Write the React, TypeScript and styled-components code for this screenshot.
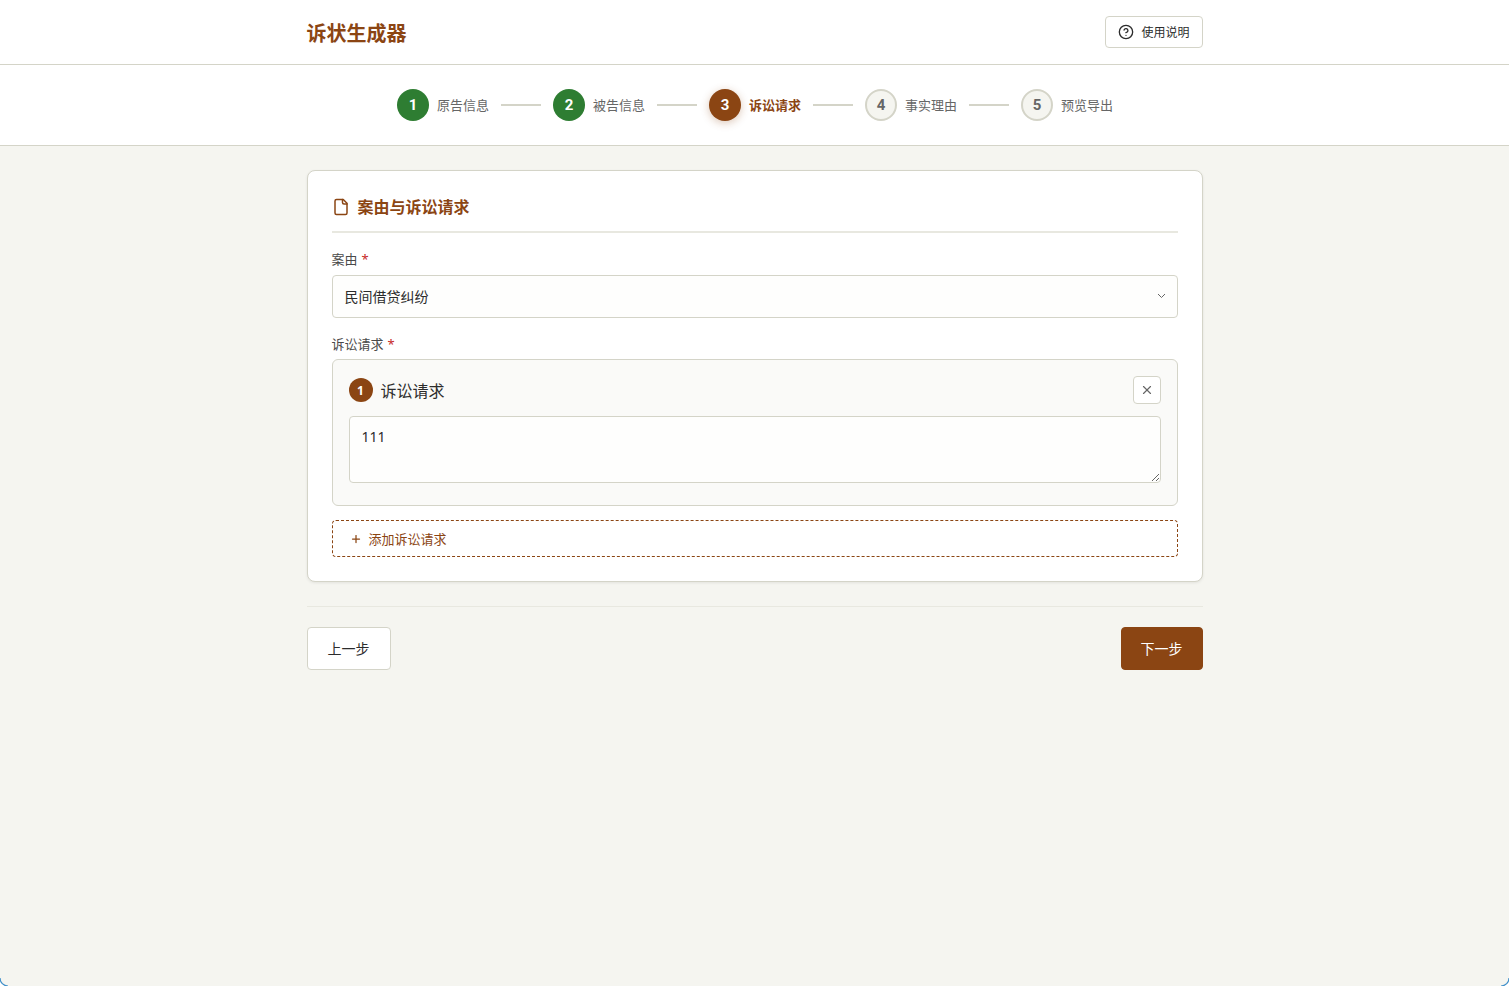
import { Fragment } from "react";
import styled, { createGlobalStyle } from "styled-components";

const GlobalStyle = createGlobalStyle`
  * {
    box-sizing: border-box;
  }
  html, body {
    margin: 0;
    height: 100%;
    background: #f5f5f0;
  }
  body {
    font-family: "Noto Sans", "Noto Sans CJK SC", sans-serif;
    color: #2c2c2c;
  }
`;

const Page = styled.div`
  min-height: 986px;
  background: #f5f5f0;
`;

const Header = styled.header`
  height: 65px;
  background: #fff;
  border-bottom: 1px solid #d4d4c8;
`;

const HeaderInner = styled.div`
  width: 896px;
  height: 100%;
  margin: 0 auto;
  display: flex;
  align-items: center;
  justify-content: space-between;
`;

const Logo = styled.h1`
  margin: 4px 0 0;
  font-size: 20px;
  line-height: 28px;
  font-weight: 700;
  color: #8b4513;
`;

const HelpButton = styled.button`
  height: 32px;
  width: 98px;
  padding: 0 12px;
  display: flex;
  align-items: center;
  gap: 8px;
  font-family: inherit;
  font-size: 12px;
  color: #2c2c2c;
  background: #fff;
  border: 1px solid #d4d4c8;
  border-radius: 4px;
`;

const StepBar = styled.nav`
  height: 81px;
  padding-left: 1px;
  background: #fff;
  border-bottom: 1px solid #d4d4c8;
  display: flex;
  align-items: center;
  justify-content: center;
`;

const Step = styled.div`
  display: flex;
  align-items: center;
  gap: 8px;
`;

const StepCircle = styled.div<{ $state: "done" | "active" | "todo" }>`
  width: 32px;
  height: 32px;
  border-radius: 50%;
  display: flex;
  align-items: center;
  justify-content: center;
  font-family: Roboto, sans-serif;
  font-size: 15px;
  font-weight: 700;
  color: ${(p) => (p.$state === "todo" ? "#666" : "#fff")};
  background: ${(p) =>
    p.$state === "done" ? "#2e7d32" : p.$state === "active" ? "#8b4513" : "#f5f5f0"};
  border: ${(p) => (p.$state === "todo" ? "2px solid #d4d4c8" : "none")};
  box-shadow: ${(p) => (p.$state === "active" ? "0 2px 8px rgba(139, 69, 19, 0.3)" : "none")};
`;

const StepLabel = styled.span<{ $active?: boolean }>`
  font-size: 13px;
  line-height: 18px;
  font-weight: ${(p) => (p.$active ? 700 : 400)};
  color: ${(p) => (p.$active ? "#8b4513" : "#666")};
`;

const Connector = styled.div`
  width: 40px;
  height: 2px;
  margin: 0 12px;
  background: #d4d4c8;
`;

const Main = styled.main`
  width: 896px;
  margin: 0 auto;
  padding-top: 24px;
`;

const Card = styled.section`
  height: 412px;
  padding: 24px;
  background: #fff;
  border: 1px solid #d4d4c8;
  border-radius: 8px;
  box-shadow: 0 1px 3px rgba(0, 0, 0, 0.08);
`;

const CardTitle = styled.h2`
  margin: 0 0 17px;
  height: 38px;
  padding-bottom: 12px;
  display: flex;
  align-items: center;
  gap: 8px;
  font-size: 16px;
  font-weight: 700;
  color: #8b4513;
  border-bottom: 2px solid #e8e8e0;
`;

const CardTitleText = styled.span`
  margin-bottom: 2px;
`;

const Field = styled.div`
  margin-bottom: 17px;

  &:last-of-type {
    margin-bottom: 14px;
  }
`;

const Label = styled.label`
  display: block;
  margin-bottom: 6px;
  font-size: 13px;
  line-height: 18px;
  color: #4a4a4a;
`;

const Required = styled.span`
  margin-left: 4px;
  color: #c62828;
`;

const SelectWrap = styled.div`
  position: relative;
  margin-top: 7px;
`;

const Select = styled.select`
  display: block;
  width: 100%;
  height: 43px;
  padding: 0 12px;
  appearance: none;
  font-family: inherit;
  font-size: 14px;
  color: #2c2c2c;
  background: #fefefd;
  border: 1px solid #d4d4c8;
  border-radius: 4px;
`;

const SelectArrow = styled.svg`
  position: absolute;
  top: 16px;
  right: 12px;
  width: 9px;
  height: 9px;
  pointer-events: none;
`;

const ClaimBox = styled.div`
  height: 147px;
  padding: 16px;
  background: #fafaf8;
  border: 1px solid #d4d4c8;
  border-radius: 6px;
`;

const ClaimHead = styled.div`
  height: 28px;
  margin-bottom: 12px;
  display: flex;
  align-items: center;
  justify-content: space-between;
`;

const ClaimTitle = styled.div`
  display: flex;
  align-items: center;
  gap: 8px;
  font-size: 16px;
`;

const ClaimBadge = styled.span`
  width: 24px;
  height: 24px;
  border-radius: 50%;
  display: flex;
  align-items: center;
  justify-content: center;
  font-size: 12px;
  font-weight: 700;
  color: #fff;
  background: #8b4513;
`;

const CloseButton = styled.button`
  width: 28px;
  height: 28px;
  padding: 0;
  display: flex;
  align-items: center;
  justify-content: center;
  background: #fff;
  border: 1px solid #d4d4c8;
  border-radius: 4px;
`;

const TextArea = styled.textarea`
  display: block;
  width: 100%;
  height: 67px;
  padding: 10px 12px;
  font-family: inherit;
  font-size: 14px;
  line-height: 20px;
  color: #2c2c2c;
  background: #fefefd;
  border: 1px solid #d4d4c8;
  border-radius: 4px;
  resize: vertical;
  outline: none;
`;

const AddButton = styled.button`
  width: 100%;
  height: 37px;
  padding: 0 17px;
  display: flex;
  align-items: center;
  gap: 7px;
  font-family: inherit;
  font-size: 13px;
  color: #8b4513;
  background: #fff;
  border: 1px dashed #8b4513;
  border-radius: 4px;
`;

const Footer = styled.div`
  margin-top: 24px;
  padding-top: 20px;
  border-top: 1px solid #e8e8e0;
  display: flex;
  justify-content: space-between;
`;

const NavButton = styled.button<{ $primary?: boolean }>`
  height: 43px;
  width: ${(p) => (p.$primary ? "82px" : "84px")};
  padding: 0 0 2px;
  font-family: inherit;
  font-size: 14px;
  color: ${(p) => (p.$primary ? "#fff" : "#2c2c2c")};
  background: ${(p) => (p.$primary ? "#8b4513" : "#fff")};
  border: 1px solid ${(p) => (p.$primary ? "#8b4513" : "#d4d4c8")};
  border-radius: 4px;
`;

const Corner = styled.svg<{ $right?: boolean }>`
  position: fixed;
  bottom: 0;
  width: 8px;
  height: 8px;
  ${(p) => (p.$right ? "right: 0;" : "left: 0;")}
`;

const steps = [
  { n: 1, label: "原告信息", state: "done" },
  { n: 2, label: "被告信息", state: "done" },
  { n: 3, label: "诉讼请求", state: "active" },
  { n: 4, label: "事实理由", state: "todo" },
  { n: 5, label: "预览导出", state: "todo" },
] as const;

export default function App() {
  return (
    <Page>
      <GlobalStyle />
      <Header>
        <HeaderInner>
          <Logo>诉状生成器</Logo>
          <HelpButton>
            <svg width="16" height="16" viewBox="0 0 24 24" fill="none" stroke="#2c2c2c" strokeWidth="2" strokeLinecap="round" strokeLinejoin="round">
              <circle cx="12" cy="12" r="10" />
              <path d="M9.09 9a3 3 0 0 1 5.83 1c0 2-3 3-3 3" />
              <path d="M12 17h.01" />
            </svg>
            使用说明
          </HelpButton>
        </HeaderInner>
      </Header>

      <StepBar>
        {steps.map((s, i) => (
          <Fragment key={s.n}>
            <Step>
              <StepCircle $state={s.state}>{s.n}</StepCircle>
              <StepLabel $active={s.state === "active"}>{s.label}</StepLabel>
            </Step>
            {i < steps.length - 1 && <Connector />}
          </Fragment>
        ))}
      </StepBar>

      <Main>
        <Card>
          <CardTitle>
            <svg width="18" height="18" viewBox="0 0 24 24" fill="none" stroke="#8b4513" strokeWidth="2" strokeLinecap="round" strokeLinejoin="round">
              <path d="M15 2H6a2 2 0 0 0-2 2v16a2 2 0 0 0 2 2h12a2 2 0 0 0 2-2V7Z" />
              <path d="M14 2v4a2 2 0 0 0 2 2h4" />
            </svg>
            <CardTitleText>案由与诉讼请求</CardTitleText>
          </CardTitle>

          <Field>
            <Label>
              案由<Required>*</Required>
            </Label>
            <SelectWrap>
              <Select defaultValue="民间借贷纠纷">
                <option>民间借贷纠纷</option>
              </Select>
              <SelectArrow viewBox="0 0 9 9" fill="none" stroke="#666" strokeWidth="1">
                <path d="M1 3l3.5 3.5L8 3" />
              </SelectArrow>
            </SelectWrap>
          </Field>

          <Field>
            <Label>
              诉讼请求<Required>*</Required>
            </Label>
            <ClaimBox>
              <ClaimHead>
                <ClaimTitle>
                  <ClaimBadge>1</ClaimBadge>
                  诉讼请求
                </ClaimTitle>
                <CloseButton>
                  <svg width="14" height="14" viewBox="0 0 24 24" fill="none" stroke="#666" strokeWidth="2" strokeLinecap="round">
                    <path d="M18 6 6 18" />
                    <path d="m6 6 12 12" />
                  </svg>
                </CloseButton>
              </ClaimHead>
              <TextArea defaultValue="111" />
            </ClaimBox>
          </Field>

          <AddButton>
            <svg width="12" height="12" viewBox="0 0 24 24" fill="none" stroke="#8b4513" strokeWidth="2.5" strokeLinecap="round">
              <path d="M5 12h14" />
              <path d="M12 5v14" />
            </svg>
            添加诉讼请求
          </AddButton>
        </Card>

        <Footer>
          <NavButton>上一步</NavButton>
          <NavButton $primary>下一步</NavButton>
        </Footer>
      </Main>

      <Corner viewBox="0 0 8 8">
        <path d="M0 0C0 4.5 3.5 8 8 8H0Z" fill="#fff" />
        <path d="M0 0C0 4.5 3.5 8 8 8" fill="none" stroke="#3f8fc9" strokeWidth="1.2" />
      </Corner>
      <Corner $right viewBox="0 0 8 8">
        <path d="M8 0C8 4.5 4.5 8 0 8H8Z" fill="#fff" />
        <path d="M8 0C8 4.5 4.5 8 0 8" fill="none" stroke="#3f8fc9" strokeWidth="1.2" />
      </Corner>
    </Page>
  );
}
